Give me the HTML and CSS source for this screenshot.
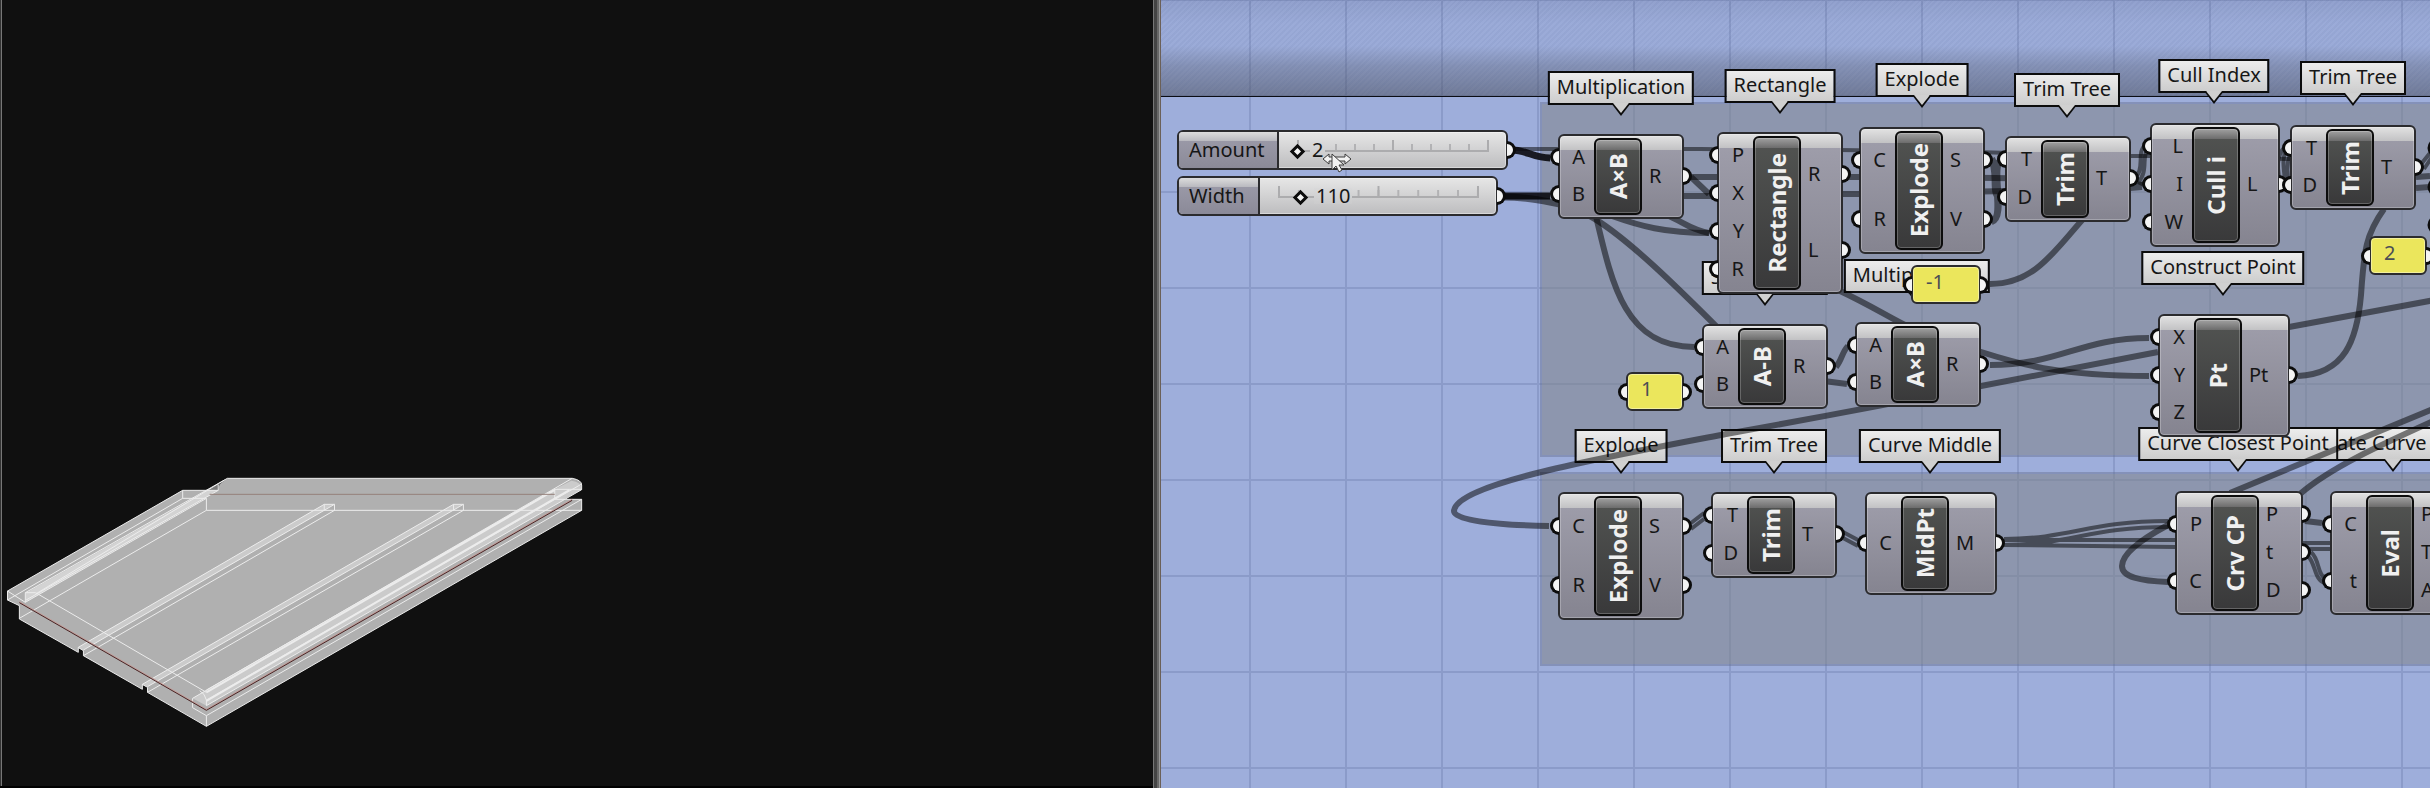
FILE: index.html
```html
<!DOCTYPE html>
<html lang="en">
<head>
<meta charset="utf-8">
<title>Parametric panel definition</title>
<link rel="stylesheet" href="styles.css">
</head>
<body>
<main class="workspace">
  <section class="viewport" aria-label="Model viewport">
    <svg class="model" viewBox="0 0 1568 1044" preserveAspectRatio="none" aria-hidden="true">
      <path class="solid" d="M19 453L462 151H552L555 133L575 115H1447Q1471 120 1471 135V149L1427 178H1471V211L522 859L373 757V742L360 735V748L211 647V632L198 625V637L49 537V497L19 480Z"/>
      <path class="band" d="M820 193H846L211 630L198 622ZM1147 193H1172L373 740L360 733ZM1403 148L1445 122Q1471 125 1471 149L522 797L487 775L522 750Z"/>
      <path class="band strong" d="M552 133V151L64 487V460Z"/>
      <path class="edge" d="M19 453L462 151H552M19 453V480L49 497V537L198 637V622L211 632V647L360 748V733L373 742V757L522 859L1471 211V178H1403V148H1471M462 151V175H522V211H1471M522 175L64 487M522 211L49 535M462 175L19 480M575 115L64 458V487M568 120L90 462M552 133V151L66 480M575 115H1447Q1471 120 1471 135V149L522 797V780Q518 760 505 752M1471 132L522 780M1447 115L487 775V803L522 827V859M522 827L1471 178M1403 148L522 750M64 458H90L522 757M19 453L64 487M820 211V193H846V211M820 193L198 622M846 193L211 630M846 211L211 647M1147 211V193H1172V211M1147 193L360 733M1172 193L373 740M1172 211L373 757"/>
      <path class="edge thick" d="M1403 150L522 757M1440 150L522 783"/>
      <path class="faint" d="M530 163H1403"/>
      <path class="blush" d="M49 485L522 808L1447 178"/>
      <path class="seam" d="M49 488L522 811L1447 181"/>
    </svg>
  </section>
  <div class="splitter" role="separator" aria-orientation="vertical"></div>
  <section class="canvas" aria-label="Definition canvas">
    <div class="grid"></div>
    <div class="shade"></div>
    <div class="group group-upper"></div>
    <div class="group group-lower"></div>

    <div class="tag tag-multiplication">Multiplication</div>
    <div class="tag tag-rectangle">Rectangle</div>
    <div class="tag tag-explode">Explode</div>
    <div class="tag tag-trim">Trim Tree</div>
    <div class="tag tag-cull">Cull Index</div>
    <div class="tag tag-trim-second">Trim Tree</div>
    <div class="tag tag-point">Construct Point</div>
    <div class="tag tag-subtraction">Subtraction</div>
    <div class="tag tag-product">Multiplication</div>
    <div class="tag tag-explode-lower">Explode</div>
    <div class="tag tag-trim-lower">Trim Tree</div>
    <div class="tag tag-middle">Curve Middle</div>
    <div class="tag tag-evaluate">Evaluate Curve</div>
    <div class="tag tag-closest">Curve Closest Point</div>

    <svg class="wires" viewBox="1161 0 1269 788" aria-hidden="true">
      <path class="wire thin" d="M1510 149H1700C1850 150 1950 151 2010 153S2120 156 2150 156L2290 159"/>
      <path class="wire" d="M1690 177H1870C1950 177 2000 178 2040 179M1684 196H1717M1843 194C1900 194 1950 192 2005 191M2416 177L2430 176M2416 188L2430 187"/>
      <path class="wire" d="M2130 183L2142 185M2130 188L2142 187"/>
      <path class="wire heavy" d="M1512 150C1526 150 1534 158 1550 158M1502 196H1550"/>
      <path class="wire heavy soft" d="M1502 197C1525 197 1540 200 1560 204"/>
      <path class="wire" d="M1595 212C1612 285 1625 347 1694 347"/>
      <path class="wire" d="M1588 215C1625 235 1680 290 1722 332"/>
      <path class="wire" d="M1612 216C1640 226 1665 233 1709 233"/>
      <path class="wire" d="M1665 214C1685 223 1692 230 1709 233"/>
      <path class="wire" d="M1691 177L1709 194"/>
      <path class="wire" d="M1838 290C1870 305 1885 315 1905 325M1975 350C2010 361 2050 376 2149 376M1824 381L1847 384"/>
      <path class="wire" d="M1836 367C1842 360 1842 352 1848 346"/>
      <path class="wire" d="M1990 365C2060 365 2080 338 2149 338"/>
      <path class="wire" d="M1549 526C1490 525 1454 520 1454 511C1456 484 1600 458 1726 434C1850 412 1900 402 1981 386L2158 352M2289 327L2440 299"/>
      <path class="wire" d="M1990 284C2035 284 2055 250 2084 218"/>
      <path class="wire thin" d="M1992 219C2004 218 1987 164 2000 160M1992 223C2009 218 1991 165 2002 162M1990 160C1997 170 1990 195 1998 198M1993 158C2001 170 1994 193 2001 196"/>
      <path class="wire thin" d="M2136 176C2145 170 2136 150 2146 145M2138 182C2149 172 2141 155 2148 150M2138 182L2146 186"/>
      <path class="wire thin" d="M2281 183C2276 170 2277 155 2284 148M2286 187C2284 172 2281 155 2287 151M2290 186C2287 176 2286 165 2290 155"/>
      <path class="wire thin" d="M2422 163L2434 148M2424 169L2434 154"/>
      <path class="wire" d="M2298 376C2345 374 2357 340 2361 295C2364 250 2366 234 2384 209"/>
      <path class="wire thin" d="M1691 523L1704 513M1691 529L1704 519M1843 532L1858 540M1843 538L1858 546"/>
      <path class="wire thin" d="M2004 539C2070 539 2090 521 2168 521M2004 545C2070 545 2090 527 2168 527M2004 540H2175M2004 545L2175 547M2303 543H2332M2303 549H2332"/>
      <path class="wire" d="M2168 525C2140 540 2122 554 2122 566C2122 577 2140 581 2168 582"/>
      <path class="wire" d="M2230 493L2440 406M2300 494C2330 468 2380 445 2440 418M2305 521L2322 523"/>
      <path class="wire thin" d="M2311 552C2320 560 2317 574 2325 578M2308 556C2316 564 2314 580 2325 583"/>
      <circle class="joint" cx="2437" cy="148" r="8"/>
      <circle class="joint" cx="2437" cy="187" r="8"/>
      <circle class="joint" cx="2437" cy="225" r="8"/>
    </svg>

    <div class="slider slider-amount">
      <label for="amount">Amount</label>
      <div class="track">
        <div class="scale"></div>
        <input id="amount" type="range" min="2" max="12" value="2">
        <output for="amount">2</output>
      </div>
    </div>
    <div class="slider slider-width">
      <label for="width">Width</label>
      <div class="track">
        <div class="scale"></div>
        <input id="width" type="range" min="0" max="1000" value="110">
        <output for="width">110</output>
      </div>
    </div>

    <article class="node node-multiplication">
      <ul class="inputs"><li>A</li><li>B</li></ul>
      <h3>A×B</h3>
      <ul class="outputs"><li>R</li></ul>
    </article>
    <article class="node node-rectangle">
      <ul class="inputs"><li>P</li><li>X</li><li>Y</li><li>R</li></ul>
      <h3>Rectangle</h3>
      <ul class="outputs"><li>R</li><li>L</li></ul>
    </article>
    <article class="node node-explode">
      <ul class="inputs"><li>C</li><li>R</li></ul>
      <h3>Explode</h3>
      <ul class="outputs"><li>S</li><li>V</li></ul>
    </article>
    <article class="node node-trim">
      <ul class="inputs"><li>T</li><li>D</li></ul>
      <h3>Trim</h3>
      <ul class="outputs"><li>T</li></ul>
    </article>
    <article class="node node-cull">
      <ul class="inputs"><li>L</li><li>I</li><li>W</li></ul>
      <h3>Cull i</h3>
      <ul class="outputs"><li>L</li></ul>
    </article>
    <article class="node node-trim-second">
      <ul class="inputs"><li>T</li><li>D</li></ul>
      <h3>Trim</h3>
      <ul class="outputs"><li>T</li></ul>
    </article>
    <article class="node node-subtraction">
      <ul class="inputs"><li>A</li><li>B</li></ul>
      <h3>A-B</h3>
      <ul class="outputs"><li>R</li></ul>
    </article>
    <article class="node node-product">
      <ul class="inputs"><li>A</li><li>B</li></ul>
      <h3>A×B</h3>
      <ul class="outputs"><li>R</li></ul>
    </article>
    <article class="node node-point">
      <ul class="inputs"><li>X</li><li>Y</li><li>Z</li></ul>
      <h3>Pt</h3>
      <ul class="outputs"><li>Pt</li></ul>
    </article>
    <article class="node node-explode-lower">
      <ul class="inputs"><li>C</li><li>R</li></ul>
      <h3>Explode</h3>
      <ul class="outputs"><li>S</li><li>V</li></ul>
    </article>
    <article class="node node-trim-lower">
      <ul class="inputs"><li>T</li><li>D</li></ul>
      <h3>Trim</h3>
      <ul class="outputs"><li>T</li></ul>
    </article>
    <article class="node node-middle">
      <ul class="inputs"><li>C</li></ul>
      <h3>MidPt</h3>
      <ul class="outputs"><li>M</li></ul>
    </article>
    <article class="node node-closest">
      <ul class="inputs"><li>P</li><li>C</li></ul>
      <h3>Crv CP</h3>
      <ul class="outputs"><li>P</li><li>t</li><li>D</li></ul>
    </article>
    <article class="node node-evaluate">
      <ul class="inputs"><li>C</li><li>t</li></ul>
      <h3>Eval</h3>
      <ul class="outputs"><li>P</li><li>T</li><li>A</li></ul>
    </article>

    <div class="note note-minus">-1</div>
    <div class="note note-one">1</div>
    <div class="note note-two">2</div>

    <svg class="pointer" viewBox="0 0 30 22" aria-hidden="true">
      <path d="M1 8L7 3V6H23V3L29 8L23 13V10H7V13Z"/>
      <path d="M10 3V19L14 15L17 21L20 19L17 14H22Z"/>
    </svg>
  </section>
</main>
</body>
</html>
```
FILE: styles.css
```css
*,
*::before,
*::after {
  box-sizing: border-box;
}

body {
  margin: 0;
  background: #000;
  font-family: "Noto Sans", "Open Sans", sans-serif;
  font-size: 20px;
  color: #161616;
}

.workspace {
  display: grid;
  grid-template-columns: minmax(0, 1153fr) 8px minmax(0, 1269fr);
  height: 100vh;
}

.viewport {
  display: flex;
  align-items: flex-end;
  overflow: hidden;
  background: #101010;
  border-bottom: 2px solid #000;
  box-shadow: inset 1px 0 #333, inset 2px 0 #777;
}

.model {
  flex: none;
  width: 620px;
  height: 348px;
  margin-bottom: -2px;
}

.model path {
  fill: none;
  vector-effect: non-scaling-stroke;
}

.model .solid { fill: #b0b0b0; }
.model .band { fill: rgba(255, 255, 255, 0.35); }
.model .strong { fill: rgba(255, 255, 255, 0.45); }
.model .edge { stroke: #ececec; stroke-width: 1; }
.model .thick { stroke-width: 2; }
.model .faint { stroke: #94807a; stroke-width: 1; }
.model .blush { stroke: #c29a96; stroke-width: 1; }
.model .seam { stroke: #4a2424; stroke-width: 1; }

.splitter {
  background: linear-gradient(to right, #777 1px, #444 1px 4px, #686868 4px 6px, #999 6px 7px, #6b6058 7px);
}

.canvas {
  position: relative;
  overflow: hidden;
  background: #9eaedb;
}

.grid,
.shade {
  position: absolute;
  inset: 0;
}

.grid {
  background:
    linear-gradient(to right, #8b9bc9 2px, transparent 2px) 88px 0 / 96px 96px,
    linear-gradient(to bottom, #8b9bc9 2px, transparent 2px) 0 -1px / 96px 96px;
}

.shade {
  height: 97px;
  border-bottom: 1px solid #0b0d14;
  background:
    repeating-linear-gradient(135deg, rgba(60, 80, 130, 0.06) 0 2px, transparent 2px 4px),
    linear-gradient(to bottom, rgba(70, 80, 120, 0.14) 0, rgba(70, 80, 120, 0.03) 24px 46px, rgba(75, 80, 95, 0.3) 66px, rgba(75, 80, 95, 0.54) 100%);
}

.group {
  position: absolute;
  left: 379px;
  right: -20px;
  border: 2px solid rgba(100, 110, 145, 0.45);
  background: rgba(128, 132, 136, 0.55);
  background-clip: padding-box;
}

.group-upper { top: 102px; height: 355px; }
.group-lower { top: 472px; height: 194px; }

/* Name tags */
.tag {
  position: absolute;
  height: 34px;
  padding: 0 7px;
  border: 2px solid #0c0c0c;
  background: linear-gradient(#ececec, #cdcdcd);
  line-height: 28px;
  white-space: nowrap;
  transform: translateX(-50%);
}

.tag::before,
.tag::after {
  content: "";
  position: absolute;
  left: calc(50% - 10px);
  top: 30px;
  width: 20px;
  height: 13px;
  background: #0c0c0c;
  clip-path: polygon(0 0, 100% 0, 50% 100%);
}

.tag::after {
  height: 10px;
  left: calc(50% - 8px);
  width: 16px;
  background: #d0d0d0;
}

.tag-multiplication { left: 460px; top: 71px; }
.tag-rectangle { left: 619px; top: 69px; }
.tag-explode { left: 761px; top: 63px; }
.tag-trim { left: 906px; top: 73px; }
.tag-cull { left: 1053px; top: 59px; }
.tag-trim-second { left: 1192px; top: 61px; }
.tag-point { left: 1062px; top: 251px; }
.tag-subtraction { left: 604px; top: 261px; }
.tag-product { left: 756px; top: 259px; }
.tag-explode-lower { left: 460px; top: 429px; }
.tag-trim-lower { left: 613px; top: 429px; }
.tag-middle { left: 769px; top: 429px; }
.tag-closest { left: 1077px; top: 427px; }
.tag-evaluate { left: 1232px; top: 427px; width: 230px; }

/* Wires */
.wires {
  position: absolute;
  left: 0;
  top: 0;
  width: 1269px;
  height: 788px;
}

.wire {
  fill: none;
  stroke: rgba(0, 0, 0, 0.5);
  stroke-width: 6;
}

.thin { stroke-width: 4; }
.heavy { stroke: rgba(10, 10, 14, 0.9); stroke-width: 7; }
.soft { stroke: rgba(0, 0, 0, 0.5); }
.joint { fill: #f4f4f4; stroke: #0c0c0c; stroke-width: 3; }

/* Components */
.node {
  position: absolute;
  display: grid;
  grid-template-columns: 34px 48px 40px;
  padding: 2px 0;
  border: 2px solid #2b2b2e;
  border-radius: 6px;
  background:
    linear-gradient(#e2e2e2, #c2c2c4) top / 100% 14px no-repeat,
    linear-gradient(#a09fac, #858490);
  box-shadow: inset 0 0 0 1px rgba(255, 255, 255, 0.25);
}

.node ul {
  display: flex;
  flex-direction: column;
  min-width: 0;
  margin: 0;
  padding: 0 0 2px;
  list-style: none;
}

.node li {
  position: relative;
  display: flex;
  flex: 1;
  align-items: center;
  min-height: 0;
  line-height: 24px;
}

.inputs li {
  justify-content: flex-end;
  padding-right: 9px;
}

.outputs li {
  padding-left: 7px;
}

.node li::before,
.note::before,
.note::after,
.slider::after {
  content: "";
  position: absolute;
  top: calc(50% - 9px);
  width: 9px;
  height: 18px;
  border: 3px solid #0c0c0c;
  background: #f4f4f4;
}

.inputs li::before,
.note::before {
  left: -10px;
  border-right: 0;
  border-radius: 9px 0 0 9px;
}

.outputs li::before,
.note::after,
.slider::after {
  right: -10px;
  border-left: 0;
  border-radius: 0 9px 9px 0;
}

.node h3 {
  display: flex;
  align-items: center;
  justify-content: center;
  margin: 0;
  border: 2px solid #0c0c0c;
  border-radius: 6px;
  background:
    linear-gradient(#a0a0a0, #6c6c6c) top / 100% 10px no-repeat,
    linear-gradient(#525452, #39393a);
  box-shadow: inset 0 0 0 1px rgba(255, 255, 255, 0.22);
  color: #f0f0f0;
  font-size: 24px;
  font-weight: 700;
  line-height: 32px;
  white-space: nowrap;
  writing-mode: sideways-lr;
}

.node-multiplication { left: 397px; top: 134px; height: 85px; }
.node-rectangle { left: 556px; top: 132px; height: 162px; }
.node-explode { left: 698px; top: 127px; height: 127px; }
.node-trim { left: 844px; top: 136px; height: 86px; }
.node-cull { left: 989px; top: 123px; height: 124px; grid-template-columns: 40px 48px 38px; }
.node-trim-second { left: 1129px; top: 125px; height: 85px; }
.node-subtraction { left: 541px; top: 324px; height: 85px; }
.node-product { left: 694px; top: 322px; height: 85px; }
.node-point { left: 997px; top: 314px; height: 123px; grid-template-columns: 34px 48px 46px; }
.node-explode-lower { left: 397px; top: 492px; height: 128px; }
.node-trim-lower { left: 550px; top: 492px; height: 86px; }
.node-middle { left: 704px; top: 492px; height: 103px; grid-template-columns: 34px 48px 46px; }
.node-closest { left: 1014px; top: 491px; height: 124px; grid-template-columns: 34px 48px 42px; }
.node-evaluate { left: 1169px; top: 491px; height: 124px; }

/* Value notes */
.note {
  position: absolute;
  width: 58px;
  height: 39px;
  padding-left: 13px;
  border: 2px solid #2b2b2e;
  border-radius: 6px;
  background: #ebe65c;
  box-shadow: inset 0 0 0 1px rgba(255, 255, 255, 0.4);
  color: #4a4d55;
  line-height: 30px;
}

.note-minus { left: 750px; top: 265px; width: 70px; }
.note-one { left: 465px; top: 372px; }
.note-two { left: 1208px; top: 236px; }

/* Number sliders */
.slider {
  position: absolute;
  display: flex;
  height: 40px;
  border: 2px solid #2b2b2e;
  border-radius: 6px;
  background: linear-gradient(#e6e6e6, #bdbdbf);
  box-shadow: inset 0 0 0 1px rgba(255, 255, 255, 0.4);
}

.slider label {
  flex: none;
  padding: 0 10px;
  border-right: 2px solid #2b2b2e;
  border-radius: 4px 0 0 4px;
  background:
    linear-gradient(#dcdcdc, #b9b9bf) top / 100% 9px no-repeat,
    linear-gradient(#9e9dab, #8b8a98);
  line-height: 36px;
}

.track {
  position: relative;
  flex: 1;
}

.scale {
  height: 12px;
  margin: 8px 17px 0 18px;
  border-right: 2px solid #acacae;
  border-bottom: 2px solid #acacae;
  background:
    linear-gradient(to right, #acacae 2px, transparent 2px) 0 0 / 50% 100% repeat-x,
    linear-gradient(to right, #b2b2b4 2px, transparent 2px) 0 4px / 10% 100% no-repeat,
    linear-gradient(to right, #b2b2b4 2px, transparent 2px) 0 100% / 10% 6px repeat-x;
}

.track input {
  position: absolute;
  left: 13px;
  right: 12px;
  top: 11px;
  width: calc(100% - 25px);
  height: 16px;
  margin: 0;
  background: none;
  appearance: none;
}

.track input::-webkit-slider-thumb {
  width: 11px;
  height: 11px;
  border: 3px solid #0c0c0c;
  background: #f4f4f4;
  appearance: none;
  transform: rotate(45deg);
}

.track output {
  position: absolute;
  top: 10px;
  padding: 0 2px;
  background: linear-gradient(#d9d9da, #cbcbcc);
  line-height: 16px;
}

.slider-amount { left: 16px; top: 130px; width: 331px; }
.slider-amount label { width: 100px; }
.slider-amount output { left: 31px; }
.slider-width { left: 16px; top: 176px; width: 321px; }
.slider-width label { width: 81px; }
.slider-width output { left: 54px; }

.pointer {
  position: absolute;
  left: 161px;
  top: 151px;
  width: 30px;
  height: 22px;
  overflow: visible;
}

.pointer path {
  fill: #f2f2f2;
  stroke: #3c3c3c;
  stroke-width: 1;
}
```
